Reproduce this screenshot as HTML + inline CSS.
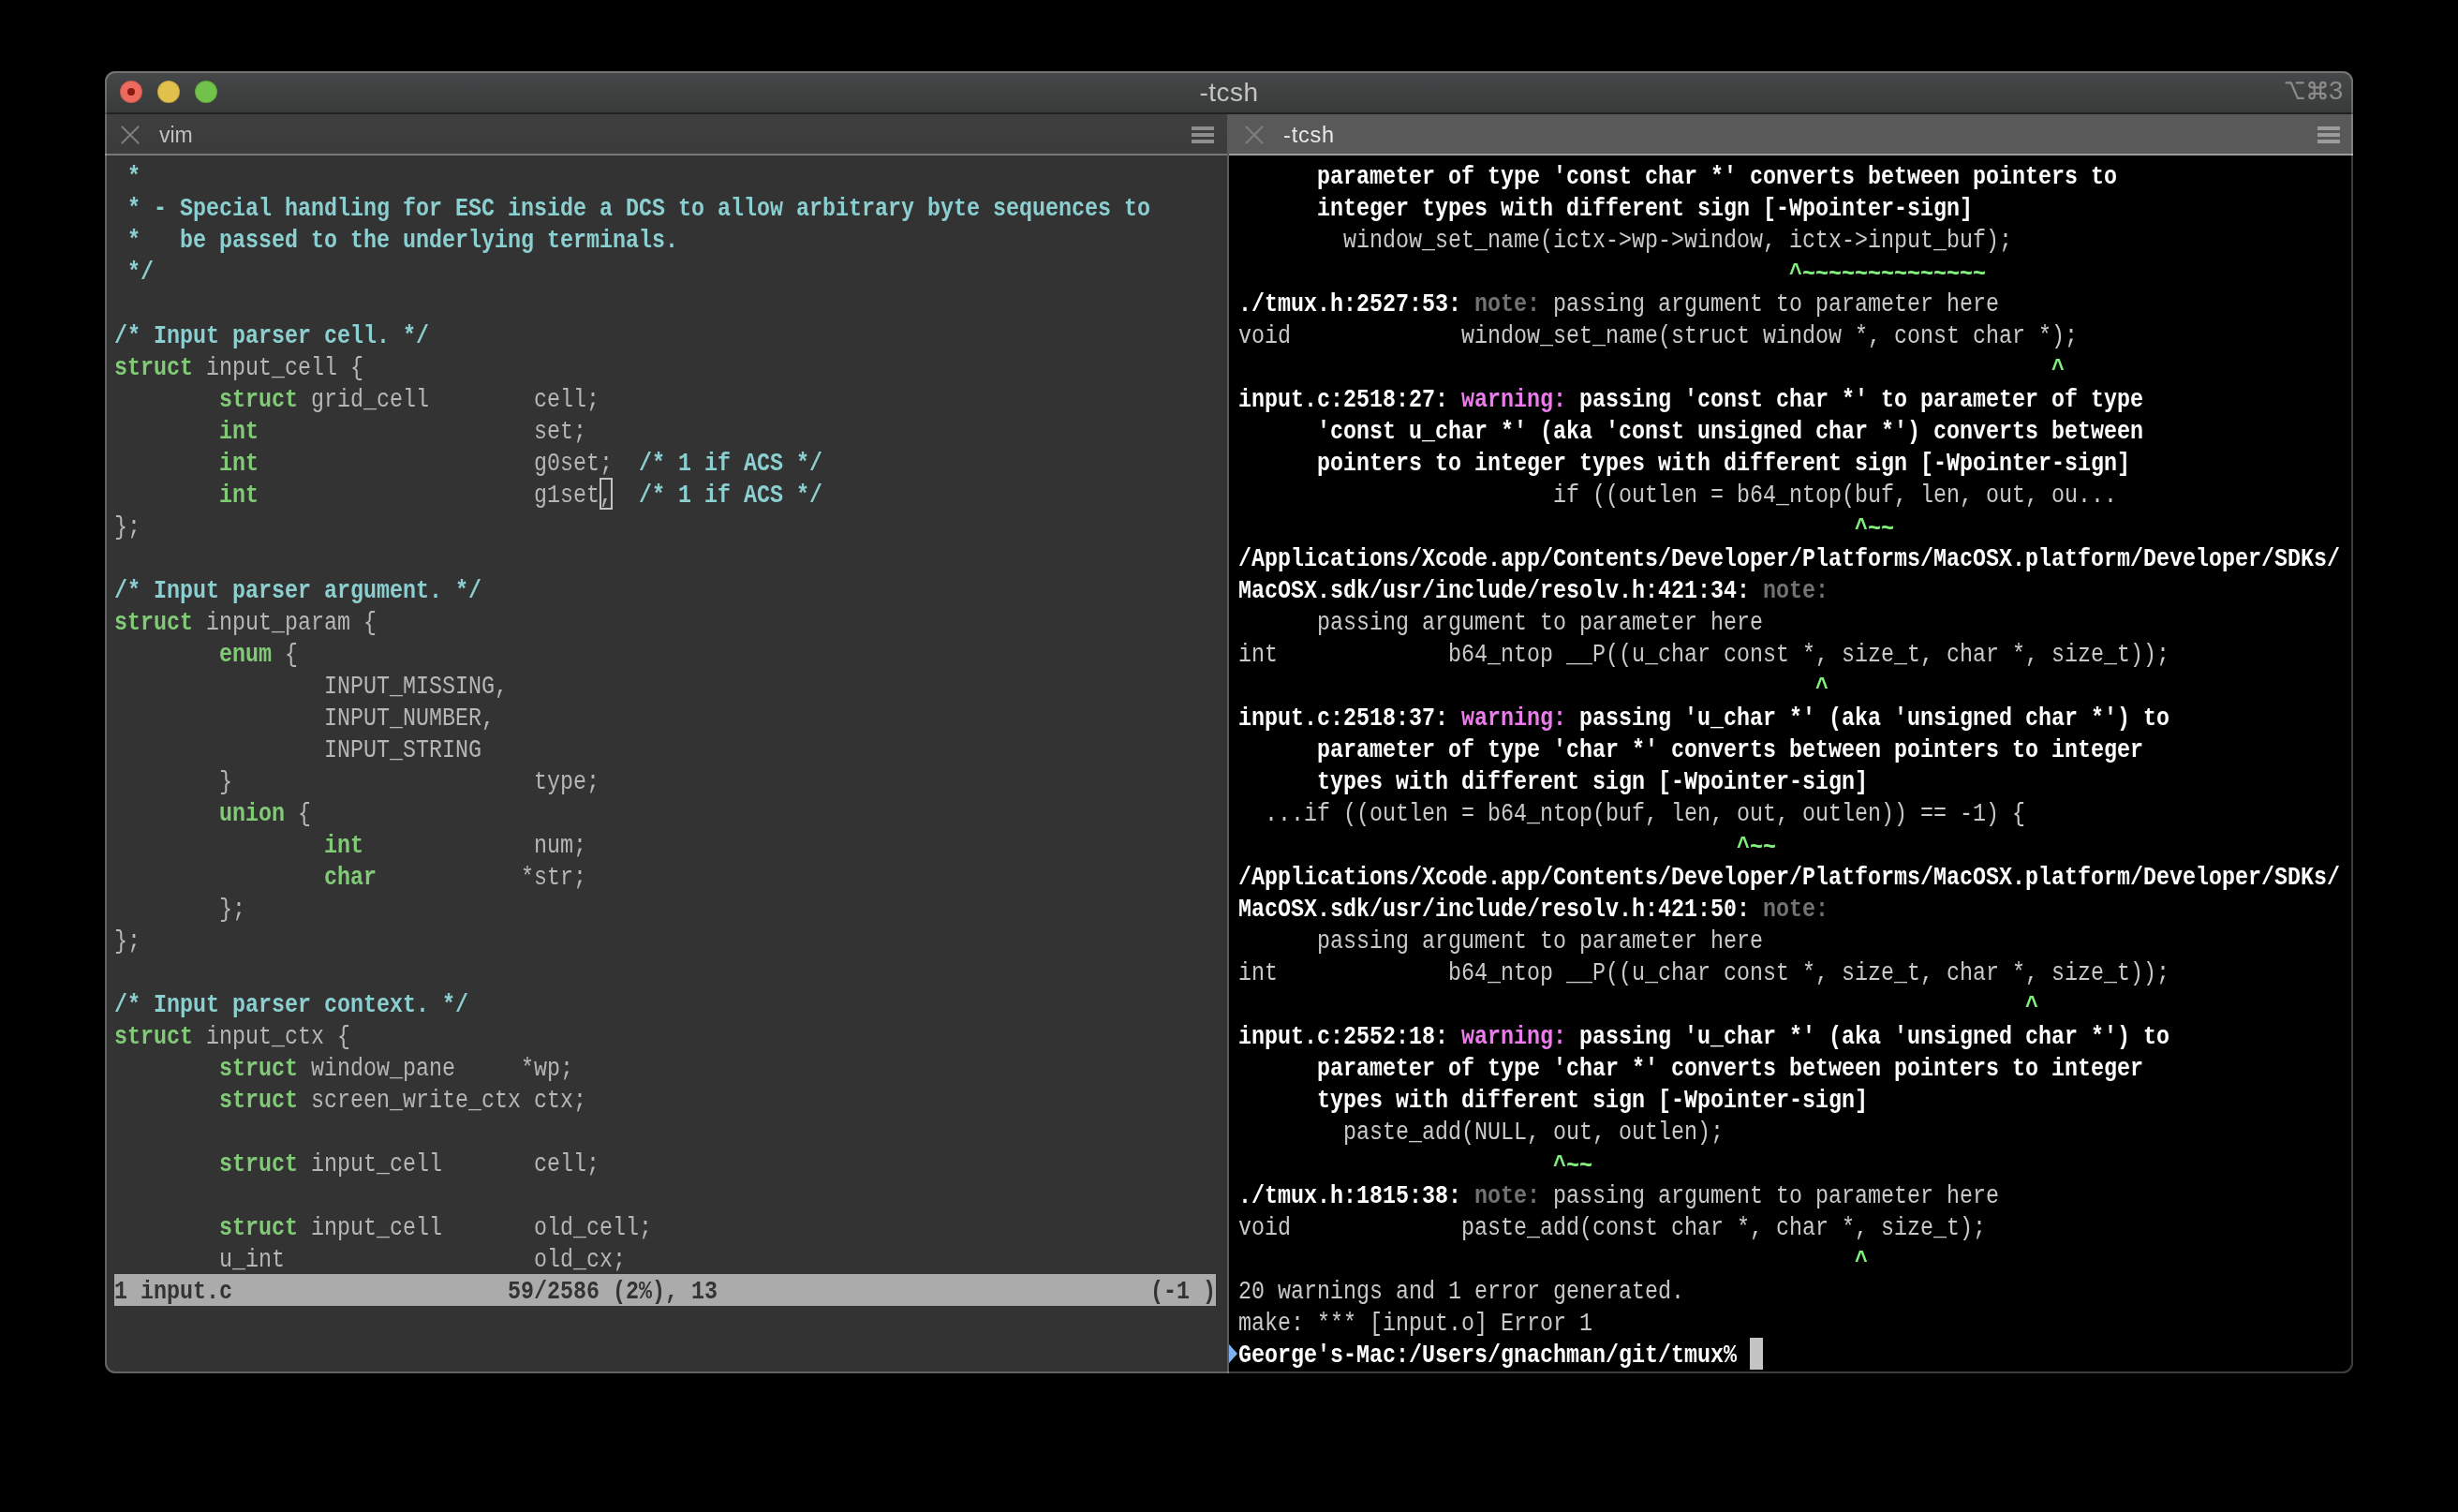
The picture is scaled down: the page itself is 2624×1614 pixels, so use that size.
<!DOCTYPE html>
<html><head><meta charset="utf-8"><style>
html,body{margin:0;padding:0;}
body{width:2624px;height:1614px;background:#000;position:relative;overflow:hidden;}
.a{position:absolute;}
.win{position:absolute;left:112px;top:76px;width:2400px;height:1390px;border-radius:11px;overflow:hidden;background:#333;}
.tb{position:absolute;left:0;top:0;width:2400px;height:44px;background:linear-gradient(#464748,#393a3a);}
.r{position:absolute;height:34px;line-height:34px;white-space:pre;font-family:"Liberation Mono",monospace;font-size:23.333px;transform:scaleY(1.18);transform-origin:0 23.20px;will-change:transform;}
.c{color:#8bcfd1;font-weight:bold;}
.k{color:#82c978;font-weight:bold;}
.n{color:#b6b6b6;}
.b{color:#ffffff;font-weight:bold;}
.r .r{}
.rr{color:#c9c9c9;}
.o{color:#727272;font-weight:bold;}
.w{color:#ec7cec;font-weight:bold;}
.g{color:#7ff07a;font-weight:bold;position:relative;top:2px;}
.st{color:#333;font-weight:bold;}
.dot{position:absolute;width:24px;height:24px;border-radius:50%;box-sizing:border-box;}
.ham{position:absolute;width:24px;height:4px;}
.sans{font-family:"Liberation Sans",sans-serif;position:absolute;white-space:pre;will-change:transform;}
</style></head><body>
<div class="win">
<div class="tb"></div>
<div class="a" style="left:0;top:44px;width:2400px;height:2px;background:#222"></div>
<div class="a" style="left:0;top:46px;width:1198px;height:42px;background:linear-gradient(#3f3f3f,#3b3b3b)"></div>
<div class="a" style="left:1198px;top:46px;width:1202px;height:42px;background:#595959"></div>
<div class="a" style="left:0;top:88px;width:1198px;height:2px;background:#787878"></div>
<div class="a" style="left:1198px;top:88px;width:2px;height:2px;background:#5a5a5a"></div>
<div class="a" style="left:1200px;top:88px;width:1200px;height:2px;background:#9c9c9c"></div>
<div class="a" style="left:0;top:90px;width:1198px;height:1300px;background:#333"></div>
<div class="a" style="left:1198px;top:90px;width:2px;height:1300px;background:#5c5c5c"></div>
<div class="a" style="left:1200px;top:90px;width:1200px;height:1300px;background:#000"></div>
</div>
<div class="dot" style="left:128px;top:86px;background:#ed6a5e;border:1px solid rgba(0,0,0,.15)"></div>
<div class="dot" style="left:136px;top:94px;width:8px;height:8px;background:#8b1a10"></div>
<div class="dot" style="left:168px;top:86px;background:#e1c04c;border:1px solid rgba(0,0,0,.15)"></div>
<div class="dot" style="left:208px;top:86px;background:#71c24a;border:1px solid rgba(0,0,0,.15)"></div>
<div class="sans" style="left:1212px;top:81.5px;width:200px;text-align:center;font-size:28px;line-height:34px;letter-spacing:0.5px;color:#c4c4c4">-tcsh</div>
<div class="sans" id="kb" style="left:2486px;top:82px;font-size:27.5px;line-height:30px;color:#8b8b8b">3</div>
<svg class="a" style="left:2436px;top:84px" width="50" height="26" viewBox="0 0 50 26"><g fill="none" stroke="#8b8b8b" stroke-width="2.2" stroke-linecap="round" stroke-linejoin="round"><path d="M4.5 4.3H9.8L16.9 20.9H22.8M15.6 4.3H22.8"/><path d="M34.7 6.6V18.55A2.7 2.7 0 1 1 32 15.85H43.9A2.7 2.7 0 1 1 41.2 18.55V6.6A2.7 2.7 0 1 1 43.9 9.3H32A2.7 2.7 0 1 1 34.7 6.6Z"/></g></svg>
<svg class="a" style="left:129px;top:134px" width="20" height="20" viewBox="0 0 20 20"><path d="M1.5 1.5L18.5 18.5M18.5 1.5L1.5 18.5" stroke="#7c7c7c" stroke-width="2.2" stroke-linecap="round"/></svg>
<div class="sans" style="left:170px;top:127px;font-size:23px;line-height:34px;color:#c0c0c0">vim</div>
<div class="ham" style="left:1272px;top:135px;background:#8e8e8e"></div><div class="ham" style="left:1272px;top:142px;background:#8e8e8e"></div><div class="ham" style="left:1272px;top:149px;background:#8e8e8e"></div>
<svg class="a" style="left:1329px;top:134px" width="20" height="20" viewBox="0 0 20 20"><path d="M1.5 1.5L18.5 18.5M18.5 1.5L1.5 18.5" stroke="#7d7d7d" stroke-width="2.2" stroke-linecap="round"/></svg>
<div class="sans" style="left:1370px;top:127px;font-size:23.5px;line-height:34px;letter-spacing:0.8px;color:#e8e8e8">-tcsh</div>
<div class="ham" style="left:2474px;top:135px;background:#9c9c9c"></div><div class="ham" style="left:2474px;top:142px;background:#9c9c9c"></div><div class="ham" style="left:2474px;top:149px;background:#9c9c9c"></div>
<div class="a" style="left:122px;top:1360px;width:1176px;height:34px;background:#ababab"></div>
<div class="a" style="left:640px;top:510px;width:14px;height:34px;box-sizing:border-box;border:2px solid #c2c2c2"></div>
<div class="a" style="left:1868px;top:1428px;width:14px;height:34px;background:#c4c4c4"></div>
<svg class="a" style="left:1312px;top:1434px" width="10" height="22" viewBox="0 0 10 22"><path d="M0 1L9 11L0 21Z" fill="#7fb2f2"/></svg>
<div class="r" style="left:122px;top:173.10px"><span class="c"> *</span></div>
<div class="r" style="left:122px;top:207.10px"><span class="c"> * - Special handling for ESC inside a DCS to allow arbitrary byte sequences to</span></div>
<div class="r" style="left:122px;top:241.10px"><span class="c"> *   be passed to the underlying terminals.</span></div>
<div class="r" style="left:122px;top:275.10px"><span class="c"> */</span></div>
<div class="r" style="left:122px;top:343.10px"><span class="c">/* Input parser cell. */</span></div>
<div class="r" style="left:122px;top:377.10px"><span class="k">struct</span><span class="n"> input_cell {</span></div>
<div class="r" style="left:122px;top:411.10px"><span class="n">        </span><span class="k">struct</span><span class="n"> grid_cell        cell;</span></div>
<div class="r" style="left:122px;top:445.10px"><span class="n">        </span><span class="k">int</span><span class="n">                     set;</span></div>
<div class="r" style="left:122px;top:479.10px"><span class="n">        </span><span class="k">int</span><span class="n">                     g0set;  </span><span class="c">/* 1 if ACS */</span></div>
<div class="r" style="left:122px;top:513.10px"><span class="n">        </span><span class="k">int</span><span class="n">                     g1set,  </span><span class="c">/* 1 if ACS */</span></div>
<div class="r" style="left:122px;top:547.10px"><span class="n">};</span></div>
<div class="r" style="left:122px;top:615.10px"><span class="c">/* Input parser argument. */</span></div>
<div class="r" style="left:122px;top:649.10px"><span class="k">struct</span><span class="n"> input_param {</span></div>
<div class="r" style="left:122px;top:683.10px"><span class="n">        </span><span class="k">enum</span><span class="n"> {</span></div>
<div class="r" style="left:122px;top:717.10px"><span class="n">                INPUT_MISSING,</span></div>
<div class="r" style="left:122px;top:751.10px"><span class="n">                INPUT_NUMBER,</span></div>
<div class="r" style="left:122px;top:785.10px"><span class="n">                INPUT_STRING</span></div>
<div class="r" style="left:122px;top:819.10px"><span class="n">        }                       type;</span></div>
<div class="r" style="left:122px;top:853.10px"><span class="n">        </span><span class="k">union</span><span class="n"> {</span></div>
<div class="r" style="left:122px;top:887.10px"><span class="n">                </span><span class="k">int</span><span class="n">             num;</span></div>
<div class="r" style="left:122px;top:921.10px"><span class="n">                </span><span class="k">char</span><span class="n">           *str;</span></div>
<div class="r" style="left:122px;top:955.10px"><span class="n">        };</span></div>
<div class="r" style="left:122px;top:989.10px"><span class="n">};</span></div>
<div class="r" style="left:122px;top:1057.10px"><span class="c">/* Input parser context. */</span></div>
<div class="r" style="left:122px;top:1091.10px"><span class="k">struct</span><span class="n"> input_ctx {</span></div>
<div class="r" style="left:122px;top:1125.10px"><span class="n">        </span><span class="k">struct</span><span class="n"> window_pane     *wp;</span></div>
<div class="r" style="left:122px;top:1159.10px"><span class="n">        </span><span class="k">struct</span><span class="n"> screen_write_ctx ctx;</span></div>
<div class="r" style="left:122px;top:1227.10px"><span class="n">        </span><span class="k">struct</span><span class="n"> input_cell       cell;</span></div>
<div class="r" style="left:122px;top:1295.10px"><span class="n">        </span><span class="k">struct</span><span class="n"> input_cell       old_cell;</span></div>
<div class="r" style="left:122px;top:1329.10px"><span class="n">        u_int                   old_cx;</span></div>
<div class="r" style="left:122px;top:1363.10px"><span class="st">1 input.c                     59/2586 (2%), 13                                 (-1 )</span></div>
<div class="r" style="left:1322px;top:173.10px"><span class="b">      parameter of type 'const char *' converts between pointers to</span></div>
<div class="r" style="left:1322px;top:207.10px"><span class="b">      integer types with different sign [-Wpointer-sign]</span></div>
<div class="r" style="left:1322px;top:241.10px"><span class="rr">        window_set_name(ictx-&gt;wp-&gt;window, ictx-&gt;input_buf);</span></div>
<div class="r" style="left:1322px;top:275.10px"><span class="g">                                          ^~~~~~~~~~~~~~~</span></div>
<div class="r" style="left:1322px;top:309.10px"><span class="b">./tmux.h:2527:53: </span><span class="o">note: </span><span class="rr">passing argument to parameter here</span></div>
<div class="r" style="left:1322px;top:343.10px"><span class="rr">void             window_set_name(struct window *, const char *);</span></div>
<div class="r" style="left:1322px;top:377.10px"><span class="g">                                                              ^</span></div>
<div class="r" style="left:1322px;top:411.10px"><span class="b">input.c:2518:27: </span><span class="w">warning:</span><span class="b"> passing 'const char *' to parameter of type</span></div>
<div class="r" style="left:1322px;top:445.10px"><span class="b">      'const u_char *' (aka 'const unsigned char *') converts between</span></div>
<div class="r" style="left:1322px;top:479.10px"><span class="b">      pointers to integer types with different sign [-Wpointer-sign]</span></div>
<div class="r" style="left:1322px;top:513.10px"><span class="rr">                        if ((outlen = b64_ntop(buf, len, out, ou...</span></div>
<div class="r" style="left:1322px;top:547.10px"><span class="g">                                               ^~~</span></div>
<div class="r" style="left:1322px;top:581.10px"><span class="b">/Applications/Xcode.app/Contents/Developer/Platforms/MacOSX.platform/Developer/SDKs/</span></div>
<div class="r" style="left:1322px;top:615.10px"><span class="b">MacOSX.sdk/usr/include/resolv.h:421:34: </span><span class="o">note:</span></div>
<div class="r" style="left:1322px;top:649.10px"><span class="rr">      passing argument to parameter here</span></div>
<div class="r" style="left:1322px;top:683.10px"><span class="rr">int             b64_ntop __P((u_char const *, size_t, char *, size_t));</span></div>
<div class="r" style="left:1322px;top:717.10px"><span class="g">                                            ^</span></div>
<div class="r" style="left:1322px;top:751.10px"><span class="b">input.c:2518:37: </span><span class="w">warning:</span><span class="b"> passing 'u_char *' (aka 'unsigned char *') to</span></div>
<div class="r" style="left:1322px;top:785.10px"><span class="b">      parameter of type 'char *' converts between pointers to integer</span></div>
<div class="r" style="left:1322px;top:819.10px"><span class="b">      types with different sign [-Wpointer-sign]</span></div>
<div class="r" style="left:1322px;top:853.10px"><span class="rr">  ...if ((outlen = b64_ntop(buf, len, out, outlen)) == -1) {</span></div>
<div class="r" style="left:1322px;top:887.10px"><span class="g">                                      ^~~</span></div>
<div class="r" style="left:1322px;top:921.10px"><span class="b">/Applications/Xcode.app/Contents/Developer/Platforms/MacOSX.platform/Developer/SDKs/</span></div>
<div class="r" style="left:1322px;top:955.10px"><span class="b">MacOSX.sdk/usr/include/resolv.h:421:50: </span><span class="o">note:</span></div>
<div class="r" style="left:1322px;top:989.10px"><span class="rr">      passing argument to parameter here</span></div>
<div class="r" style="left:1322px;top:1023.10px"><span class="rr">int             b64_ntop __P((u_char const *, size_t, char *, size_t));</span></div>
<div class="r" style="left:1322px;top:1057.10px"><span class="g">                                                            ^</span></div>
<div class="r" style="left:1322px;top:1091.10px"><span class="b">input.c:2552:18: </span><span class="w">warning:</span><span class="b"> passing 'u_char *' (aka 'unsigned char *') to</span></div>
<div class="r" style="left:1322px;top:1125.10px"><span class="b">      parameter of type 'char *' converts between pointers to integer</span></div>
<div class="r" style="left:1322px;top:1159.10px"><span class="b">      types with different sign [-Wpointer-sign]</span></div>
<div class="r" style="left:1322px;top:1193.10px"><span class="rr">        paste_add(NULL, out, outlen);</span></div>
<div class="r" style="left:1322px;top:1227.10px"><span class="g">                        ^~~</span></div>
<div class="r" style="left:1322px;top:1261.10px"><span class="b">./tmux.h:1815:38: </span><span class="o">note: </span><span class="rr">passing argument to parameter here</span></div>
<div class="r" style="left:1322px;top:1295.10px"><span class="rr">void             paste_add(const char *, char *, size_t);</span></div>
<div class="r" style="left:1322px;top:1329.10px"><span class="g">                                               ^</span></div>
<div class="r" style="left:1322px;top:1363.10px"><span class="rr">20 warnings and 1 error generated.</span></div>
<div class="r" style="left:1322px;top:1397.10px"><span class="rr">make: *** [input.o] Error 1</span></div>
<div class="r" style="left:1322px;top:1431.10px"><span class="b">George's-Mac:/Users/gnachman/git/tmux%</span></div>
<div class="a" style="left:112px;top:76px;width:2400px;height:1390px;box-sizing:border-box;border:2px solid rgba(255,255,255,.24);border-radius:11px"></div>
</body></html>
